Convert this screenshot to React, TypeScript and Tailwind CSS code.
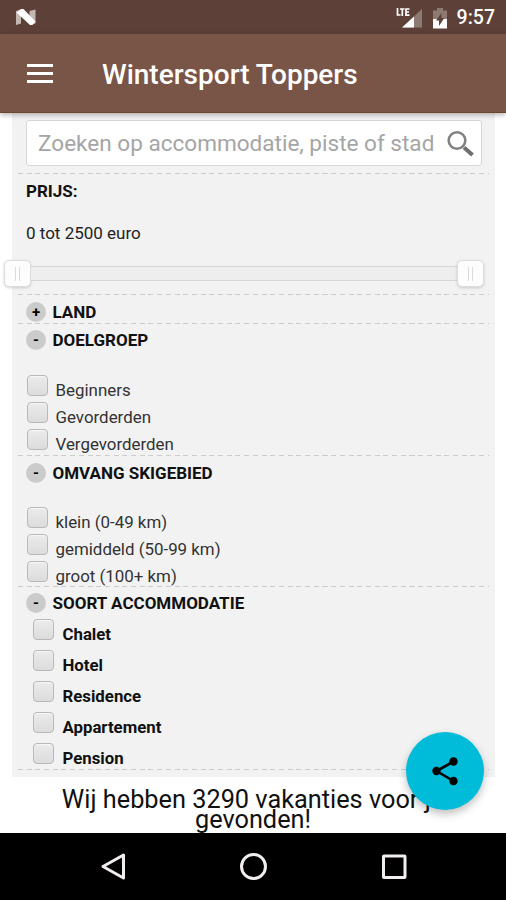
import type { ReactNode } from "react"

const doelgroepen = ["Beginners", "Gevorderden", "Vergevorderden"]
const skigebieden = ["klein (0-49 km)", "gemiddeld (50-99 km)", "groot (100+ km)"]
const accommodaties = ["Chalet", "Hotel", "Residence", "Appartement", "Pension"]

function StatusBar() {
  return (
    <div className="flex h-[34px] shrink-0 items-center justify-between bg-[#5d4037] pr-[11px] pl-[15px]">
      <svg className="h-[18px] w-[22px]" viewBox="0 0 22 18">
        <path d="M1 3l5-1.500v14l-5 1.500zM14.500 3l6-1.500v14l-6 1z" fill="#c4b6b0" />
        <path d="M1.500 4.500l4.500-3.500h2.500L20.500 13.500l-3 3.500h-2.500z" fill="#fff" />
      </svg>
      <div className="flex items-center pt-[2px]">
        <svg className="mr-[10px] h-[22px] w-[27px]" viewBox="0 0 27 22">
          <path d="M26 2v18.500H6z" fill="#8e7973" />
          <path d="M18 9.500v11H6z" fill="#fff" />
          <path d="M0 1h14v9H0z" fill="#5d4037" />
          <path
            d="M1.500 1v7h3M4 2h4.500M6.300 2v7M13.500 2h-3.500v6.200h3.500M10 5h3"
            fill="none"
            stroke="#fff"
            strokeWidth="1.700"
          />
        </svg>
        <svg className="mr-[10px] h-[21px] w-[14px]" viewBox="0 0 14 21">
          <path d="M4 0h6v2.500h4V12H0V2.500h4z" fill="#8e7973" />
          <path d="M0 11h14v9.500H0z" fill="#fff" />
          <path d="M8.500 5v5h2.700L6 18v-5.500H3z" fill="#5d4037" />
        </svg>
        <span className="text-[19.5px] leading-none font-medium text-white">9:57</span>
      </div>
    </div>
  )
}

function AppBar() {
  return (
    <header className="z-10 flex h-[79px] shrink-0 items-center border-b border-[#6d4632] bg-[#795548] pl-[27px] shadow-[0_2px_5px_rgba(0,0,0,0.28)]">
      <div className="mr-[49px] flex w-[26px] flex-col gap-[5px]">
        <span className="h-[3px] bg-white" />
        <span className="h-[3px] bg-white" />
        <span className="h-[3px] bg-white" />
      </div>
      <h1 className="pt-[4px] text-[28px] leading-8 font-medium whitespace-nowrap text-white">Wintersport Toppers</h1>
    </header>
  )
}

function Divider() {
  return (
    <div className="ml-[6px] h-px w-[471px] shrink-0 bg-[repeating-linear-gradient(90deg,#cccccc_0px,#cccccc_5px,transparent_5px,transparent_8.7px)]" />
  )
}

function Checkbox() {
  return (
    <span className="size-[21px] shrink-0 rounded-[4px] border-[1.5px] border-[#b8b8b8] bg-linear-to-b from-[#ebebeb] to-[#dcdcdc] shadow-[inset_0_1px_1px_#f8f8f8]" />
  )
}

function SectionTitle({ sign, children }: { sign: string; children: ReactNode }) {
  return (
    <div className="flex h-5 items-center gap-[6.5px] pl-[14px]">
      <span className="flex size-5 items-center justify-center rounded-full bg-[#cbcbcb] text-[15px] leading-none font-bold text-black">
        {sign}
      </span>
      <h2 className="text-[17px] leading-5 font-bold text-[#111]">{children}</h2>
    </div>
  )
}

function Options({ items }: { items: string[] }) {
  return (
    <ul className="pl-[14.5px]">
      {items.map((item) => (
        <li key={item} className="flex h-[27px] gap-[8px]">
          <Checkbox />
          <span className="pt-1 text-[16.9px] leading-[23px] text-[#333]">{item}</span>
        </li>
      ))}
    </ul>
  )
}

function SliderHandle() {
  return (
    <span className="flex size-[27px] items-center justify-center gap-[3px] rounded-[5px] border border-[#dcdcdc] bg-[#fdfdfd] shadow-[0_1px_3px_rgba(0,0,0,0.16)]">
      <span className="h-[14px] w-px bg-[#dcdcdc]" />
      <span className="h-[14px] w-px bg-[#dcdcdc]" />
    </span>
  )
}

function Filters() {
  return (
    <main className="mr-[11px] ml-3 flex h-[664px] shrink-0 flex-col bg-[#f2f2f2] pt-[7px]">
      <div className="mr-[13px] ml-[14px] flex h-[46px] shrink-0 items-center justify-between rounded-[3px] border-[1.5px] border-[#d6d6d6] bg-white pr-[7px] pl-[11px]">
        <span className="pt-[2px] text-[22.55px] leading-7 whitespace-nowrap text-[#a5a5a5]">
          Zoeken op accommodatie, piste of stad
        </span>
        <svg className="size-[27px] shrink-0" viewBox="0 0 27 27" fill="none" stroke="#828282">
          <circle cx="10" cy="10.500" r="8.300" strokeWidth="2.600" />
          <path d="M17 17.500l8.500 7.500" stroke="#6f6f6f" strokeWidth="4" />
        </svg>
      </div>
      <div className="h-[7px] shrink-0" />
      <Divider />
      <section className="h-[120px] shrink-0 pt-[7px]">
        <h2 className="pl-[14px] text-[17px] leading-5 font-bold text-[#111]">PRIJS:</h2>
        <p className="mt-[22px] pl-[14px] text-[17px] leading-5 text-[#222]">0 tot 2500 euro</p>
        <div className="-ml-2 flex w-[480px] items-center pt-[17px]">
          <SliderHandle />
          <div className="h-[15px] grow border-y-[1.5px] border-[#d6d6d6] bg-[#eee]" />
          <SliderHandle />
        </div>
      </section>
      <Divider />
      <section className="h-[28px] shrink-0 pt-[7px]">
        <SectionTitle sign="+">LAND</SectionTitle>
      </section>
      <Divider />
      <section className="h-[131px] shrink-0 pt-[6px]">
        <SectionTitle sign="-">DOELGROEP</SectionTitle>
        <div className="pt-[25px]">
          <Options items={doelgroepen} />
        </div>
      </section>
      <Divider />
      <section className="h-[130px] shrink-0 pt-[7px]">
        <SectionTitle sign="-">OMVANG SKIGEBIED</SectionTitle>
        <div className="pt-[24px]">
          <Options items={skigebieden} />
        </div>
      </section>
      <Divider />
      <section className="h-[182px] shrink-0 pt-[6px]">
        <SectionTitle sign="-">SOORT ACCOMMODATIE</SectionTitle>
        <ul className="pt-[6px] pl-[20.5px]">
          {accommodaties.map((item) => (
            <li key={item} className="flex h-[31px] gap-[9px]">
              <Checkbox />
              <span className="pt-1 text-[16.8px] leading-[23px] font-bold text-[#111]">{item}</span>
            </li>
          ))}
        </ul>
      </section>
      <Divider />
    </main>
  )
}

function NavigationBar() {
  return (
    <nav className="h-[67px] shrink-0 bg-black">
      <svg className="h-[67px] w-full" viewBox="0 0 506 67" fill="none" stroke="#f2eeee" strokeWidth="3">
        <path d="M123.500 22v23L103 33.500z" strokeLinejoin="round" />
        <circle cx="253.500" cy="33.500" r="12" />
        <rect x="383.500" y="23" width="21.500" height="21.500" rx="0.500" />
      </svg>
    </nav>
  )
}

export default function App() {
  return (
    <div className="relative flex h-[900px] w-[506px] flex-col overflow-hidden bg-white font-[Roboto,sans-serif]">
      <StatusBar />
      <AppBar />
      <Filters />
      <p className="h-[56px] shrink-0 pt-[13px] text-center text-[25.3px] leading-5 text-[#111]">
        Wij hebben 3290 vakanties voor je
        <br />
        gevonden!
      </p>
      <NavigationBar />
      <button className="absolute top-[732px] left-[406px] flex size-[78px] items-center justify-center rounded-full bg-[#00bcd8] shadow-[0_4px_8px_rgba(0,0,0,0.25)]">
        <svg className="size-[30px]" viewBox="0 0 30 30">
          <path d="M23.500 5.500L6.500 15l17 10" fill="none" stroke="#000" strokeWidth="2.600" />
          <circle cx="23.500" cy="5.500" r="4.200" />
          <circle cx="6.500" cy="15" r="4.200" />
          <circle cx="23.500" cy="25" r="4.200" />
        </svg>
      </button>
    </div>
  )
}
